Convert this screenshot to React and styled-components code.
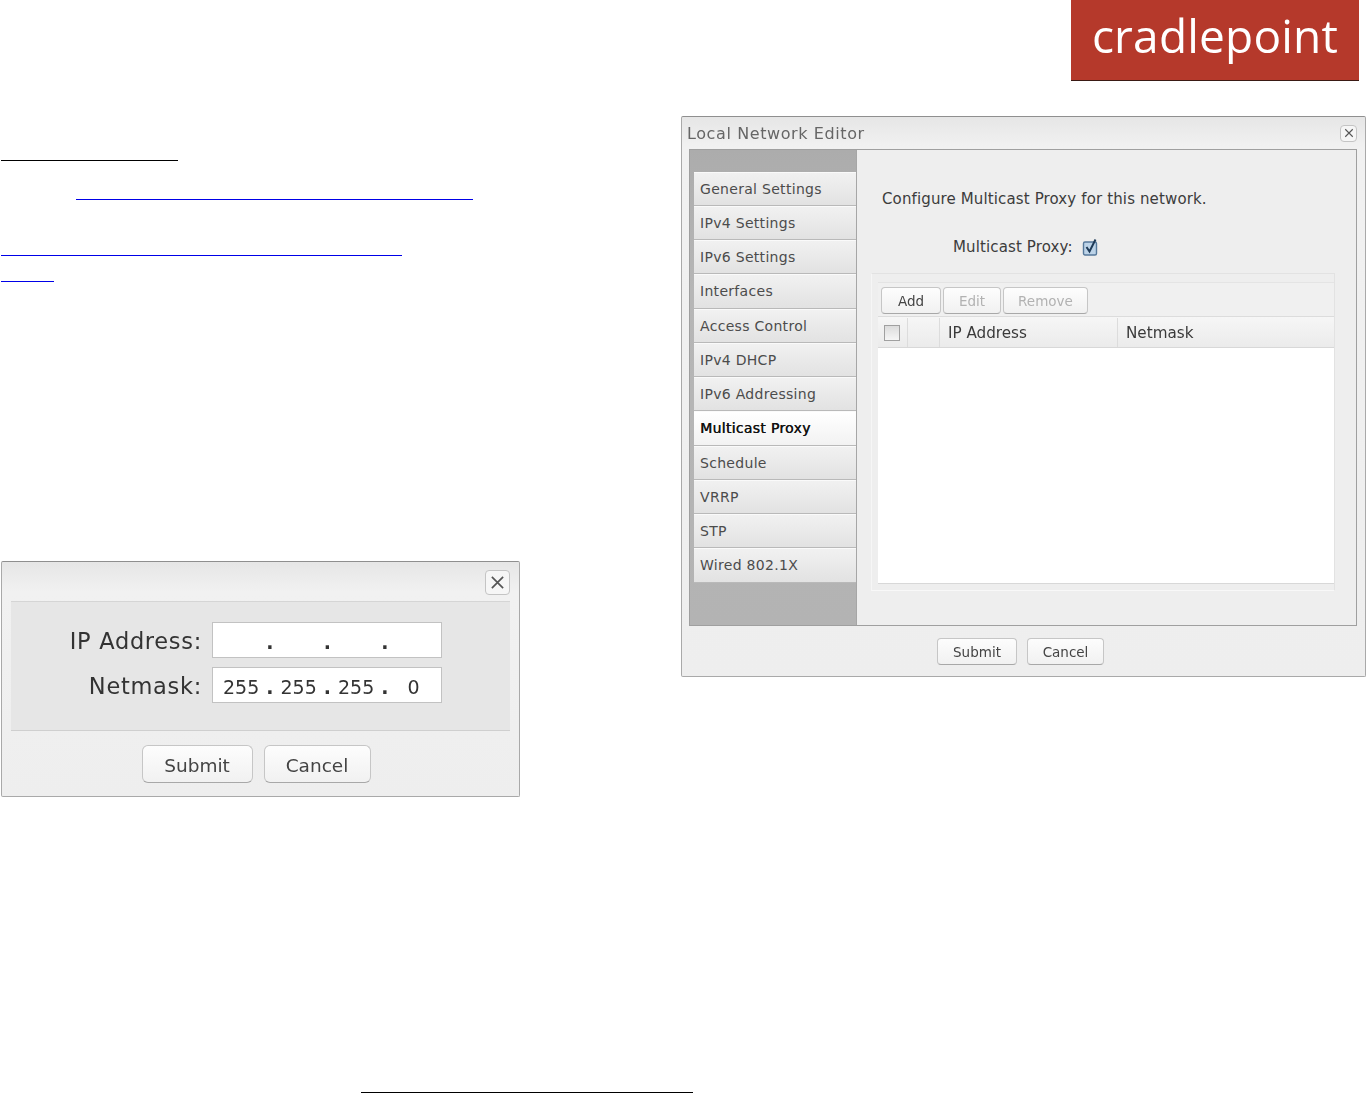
import React from "react";
import styled, { createGlobalStyle } from "styled-components";

const Global = createGlobalStyle`
  html, body { margin: 0; padding: 0; background: #fff; }
  body { font-family: "DejaVu Sans", "Liberation Sans", sans-serif; }
`;

const Page = styled.div`
  width: 1366px;
  height: 1094px;
  overflow: hidden;
  background: #fff;
`;
const Header = styled.header`
  display: flex;
  justify-content: flex-end;
  padding-right: 7px;
`;
const Logo = styled.div`
  width: 288px;
  height: 81px;
  box-sizing: border-box;
  border-bottom: 1px solid #3a1a14;
  background: #b5392b;
  color: #fff;
  font-family: "Open Sans", "DejaVu Sans", sans-serif;
  font-weight: 400;
  font-size: 46px;
  letter-spacing: 0.2px;
  line-height: 71px;
  text-align: center;
  filter: blur(0.5px);
`;
const Columns = styled.main`
  display: grid;
  grid-template-columns: 681px 685px;
  height: 1013px;
`;
const LeftColumn = styled.section`
  display: flex;
  flex-direction: column;
`;
const Rule = styled.div`
  height: 1px;
  width: ${(p) => p.$width}px;
  margin-left: ${(p) => p.$left}px;
  margin-top: ${(p) => p.$top}px;
  background: ${(p) => (p.$link ? "#0000e8" : "#000")};
`;
const RightColumn = styled.section`
  padding-top: 35px;
`;
const Frame = styled.div`
  box-sizing: border-box;
  border: 1px solid #a9a9a9;
  border-top-color: #8f8f8f;
  border-radius: 2px;
  background: linear-gradient(#e6e6e6, #f1f1f1 30px, #eeeeee);
  color: #333;
  filter: blur(0.45px);
`;
const SmallDialog = styled(Frame)`
  width: 519px;
  height: 236px;
  margin: 279px 0 0 1px;
  display: flex;
  flex-direction: column;
`;
const SmallTop = styled.div`
  height: 39px;
  display: flex;
  justify-content: flex-end;
  align-items: flex-start;
  padding: 8px 9px 0 0;
  box-sizing: border-box;
`;
const Close = styled.div`
  box-sizing: border-box;
  width: ${(p) => p.$size}px;
  height: ${(p) => p.$size}px;
  display: flex;
  align-items: center;
  justify-content: center;
  border: 1px solid #c4c4c4;
  border-radius: 4px;
  background: #f6f6f6;
  color: #555;
`;
const FormPanel = styled.div`
  margin: 0 9px;
  height: 130px;
  box-sizing: border-box;
  border-top: 1px solid #d5d5d5;
  border-bottom: 1px solid #cfcfcf;
  background: #e6e6e6;
  padding: 20px 0 0 0;
  display: grid;
  grid-template-columns: 191px 230px;
  grid-auto-rows: 36px;
  column-gap: 10px;
  row-gap: 9px;
  align-items: center;
`;
const BigLabel = styled.div`
  text-align: right;
  font-size: 22.5px;
  letter-spacing: 0.7px;
  padding-top: 2px;
  color: #333;
`;
const IpField = styled.div`
  box-sizing: border-box;
  height: 36px;
  display: flex;
  align-items: center;
  padding: 4px 0 0 10px;
  background: #fff;
  border: 1px solid #c2c2c2;
  font-size: 19px;
  color: #333;
`;
const Octet = styled.span`
  width: 36px;
  text-align: center;
  flex: none;
`;
const Dot = styled.span`
  width: 21.5px;
  flex: none;
  text-align: center;
  font-weight: 700;
`;
const SmallFooter = styled.div`
  flex: 1;
  display: flex;
  justify-content: center;
  gap: 11px;
  padding: 14px 9px 0 0;
`;
const Button = styled.div`
  box-sizing: border-box;
  height: ${(p) => p.$h}px;
  width: ${(p) => p.$w}px;
  display: flex;
  align-items: center;
  justify-content: center;
  padding-top: ${(p) => (p.$big ? 2 : 0)}px;
  background: linear-gradient(#fdfdfd, #f1f1f1);
  border: 1px solid #c6c6c6;
  border-bottom-color: #a8a8a8;
  border-radius: ${(p) => (p.$big ? 6 : 4)}px;
  font-size: ${(p) => (p.$big ? 18.5 : 13.5)}px;
  color: ${(p) => (p.$off ? "#b2b2b2" : "#444")};
`;
const BigDialog = styled(Frame)`
  width: 685px;
  height: 561px;
  display: flex;
  flex-direction: column;
`;
const TitleBar = styled.div`
  height: 32px;
  display: flex;
  align-items: center;
  justify-content: space-between;
  padding: 0 8px 0 5px;
  font-size: 16px;
  letter-spacing: 0.6px;
  color: #666;
`;
const Body = styled.div`
  margin: 0 8px 0 7px;
  height: 477px;
  box-sizing: border-box;
  border: 1px solid #9f9f9f;
  display: flex;
`;
const Sidebar = styled.nav`
  width: 167px;
  flex: none;
  box-sizing: border-box;
  border-right: 1px solid #a6a6a6;
  padding: 21.5px 0 0 4px;
  background: linear-gradient(#acacac, #b6b6b6 30%, #b3b3b3);
`;
const NavItem = styled.div`
  box-sizing: border-box;
  height: 34.25px;
  display: flex;
  align-items: center;
  padding: 0 0 0 6px;
  font-size: 14px;
  letter-spacing: 0.3px;
  color: ${(p) => (p.$active ? "#111" : "#4c4c4c")};
  text-shadow: ${(p) => (p.$active ? "0.4px 0 0 #111" : "none")};
  border-bottom: 1px solid #b9b9b9;
  border-top: 1px solid #fafafa;
  background: ${(p) =>
    p.$active
      ? "linear-gradient(#fff, #f2f2f2)"
      : "linear-gradient(#f1f1f1, #e2e2e2)"};
`;
const Content = styled.div`
  flex: 1;
  background: #eeeeee;
  padding: 39px 21px 0 14px;
  display: flex;
  flex-direction: column;
`;
const Intro = styled.div`
  margin-left: 11px;
  font-size: 15px;
  letter-spacing: 0.13px;
  line-height: 20px;
  color: #3c3c3c;
`;
const ProxyRow = styled.div`
  display: flex;
  align-items: center;
  gap: 9px;
  margin: 28px 0 0 82px;
  height: 20px;
  font-size: 15px;
  letter-spacing: 0.13px;
  color: #3c3c3c;
`;
const GridBox = styled.div`
  margin-top: 16px;
  height: 318px;
  box-sizing: border-box;
  border: 1px solid #e2e2e2;
  border-left-color: #f6f6f6;
  border-bottom-color: #f8f8f8;
  padding: 8px 0 6px 6px;
  display: flex;
  flex-direction: column;
`;
const GridToolbar = styled.div`
  height: 35px;
  flex: none;
  box-sizing: border-box;
  border-top: 1px solid #e4e4e4;
  border-bottom: 1px solid #dcdcdc;
  background: #f0f0f0;
  display: flex;
  gap: 2px;
  padding: 4px 0 0 3px;
`;
const GridHead = styled.div`
  height: 31px;
  flex: none;
  box-sizing: border-box;
  display: grid;
  grid-template-columns: 30px 32px 178px 1fr;
  padding-top: 1px;
  border-bottom: 1px solid #d8d8d8;
  background: linear-gradient(#f6f6f6, #ebebeb);
  font-size: 15.2px;
  color: #3a3a3a;
`;
const HeadCell = styled.div`
  display: flex;
  align-items: center;
  padding-left: ${(p) => p.$pad || 8}px;
  border-right: 1px solid ${(p) => (p.$last ? "transparent" : "#dcdcdc")};
`;
const CheckBox = styled.div`
  width: 16px;
  height: 16px;
  box-sizing: border-box;
  border: 1px solid #a0a0a0;
  background: linear-gradient(#dcdcdc, #f6f6f6);
`;
const GridRows = styled.div`
  flex: 1;
  background: #fff;
  border-bottom: 1px solid #d8d8d8;
`;
const BigFooter = styled.div`
  flex: 1;
  display: flex;
  justify-content: center;
  gap: 10px;
  padding: 12px 6px 0 0;
`;

const CloseIcon = ({ s }) => (
  <svg width={s} height={s} viewBox="0 0 16 16" fill="none" stroke="currentColor" strokeWidth="1.8">
    <path d="M2 2 L14 14 M14 2 L2 14" />
  </svg>
);
const Checked = () => (
  <svg width="18" height="20" viewBox="0 0 18 20">
    <rect x="1.5" y="5" width="13" height="13" rx="1.5" fill="#bcd3e8" stroke="#55789a" strokeWidth="1.4" />
    <path d="M4.5 10 L7.5 14.5 L13.5 2.5" fill="none" stroke="#1f3b58" strokeWidth="2" />
  </svg>
);

const navItems = [
  "General Settings",
  "IPv4 Settings",
  "IPv6 Settings",
  "Interfaces",
  "Access Control",
  "IPv4 DHCP",
  "IPv6 Addressing",
  "Multicast Proxy",
  "Schedule",
  "VRRP",
  "STP",
  "Wired 802.1X",
];

const IpValue = ({ parts }) => (
  <IpField>
    {parts.map((p, i) => (
      <React.Fragment key={i}>
        <Octet>{p}</Octet>
        {i < 3 && <Dot>.</Dot>}
      </React.Fragment>
    ))}
  </IpField>
);

export default function App() {
  return (
    <Page>
      <Global />
      <Header>
        <Logo>cradlepoint</Logo>
      </Header>
      <Columns>
        <LeftColumn>
          <Rule $left={1} $width={177} $top={79} />
          <Rule $left={76} $width={397} $top={38} $link />
          <Rule $left={1} $width={401} $top={55} $link />
          <Rule $left={1} $width={53} $top={25} $link />
          <SmallDialog>
            <SmallTop>
              <Close $size={25}>
                <CloseIcon s={15} />
              </Close>
            </SmallTop>
            <FormPanel>
              <BigLabel>IP Address:</BigLabel>
              <IpValue parts={["", "", "", ""]} />
              <BigLabel>Netmask:</BigLabel>
              <IpValue parts={["255", "255", "255", "0"]} />
            </FormPanel>
            <SmallFooter>
              <Button $big $w={111} $h={38}>Submit</Button>
              <Button $big $w={107} $h={38}>Cancel</Button>
            </SmallFooter>
          </SmallDialog>
          <Rule $left={361} $width={332} $top={295} />
        </LeftColumn>
        <RightColumn>
          <BigDialog>
            <TitleBar>
              Local Network Editor
              <Close $size={17}>
                <CloseIcon s={10} />
              </Close>
            </TitleBar>
            <Body>
              <Sidebar>
                {navItems.map((n) => (
                  <NavItem key={n} $active={n === "Multicast Proxy"}>{n}</NavItem>
                ))}
              </Sidebar>
              <Content>
                <Intro>Configure Multicast Proxy for this network.</Intro>
                <ProxyRow>
                  Multicast Proxy:
                  <Checked />
                </ProxyRow>
                <GridBox>
                  <GridToolbar>
                    <Button $w={60} $h={27}>Add</Button>
                    <Button $off $w={58} $h={27}>Edit</Button>
                    <Button $off $w={85} $h={27}>Remove</Button>
                  </GridToolbar>
                  <GridHead>
                    <HeadCell $pad={6}><CheckBox /></HeadCell>
                    <HeadCell />
                    <HeadCell>IP Address</HeadCell>
                    <HeadCell $last>Netmask</HeadCell>
                  </GridHead>
                  <GridRows />
                </GridBox>
              </Content>
            </Body>
            <BigFooter>
              <Button $w={80} $h={27}>Submit</Button>
              <Button $w={77} $h={27}>Cancel</Button>
            </BigFooter>
          </BigDialog>
        </RightColumn>
      </Columns>
    </Page>
  );
}
